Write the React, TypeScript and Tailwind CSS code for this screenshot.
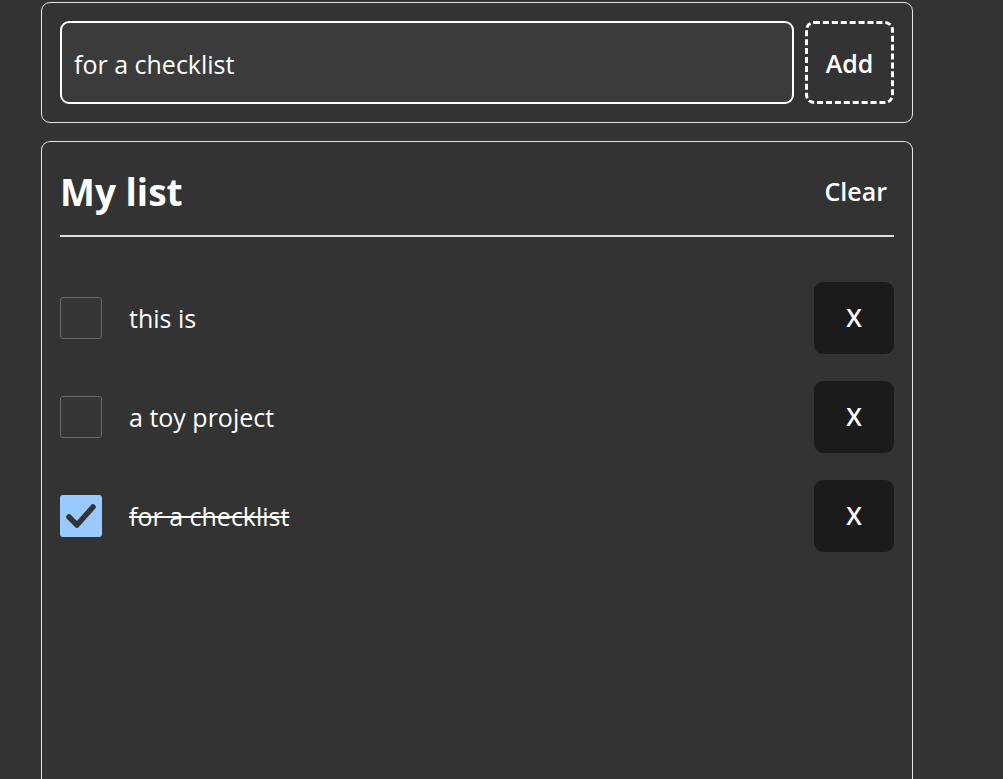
import { useState } from 'react';

type Item = { id: number; text: string; done: boolean };

function CheckBox({ checked, onToggle }: { checked: boolean; onToggle: () => void }) {
  return (
    <button
      onClick={onToggle}
      className={
        checked
          ? 'w-[42px] h-[42px] rounded-[3px] bg-[#99c9ff] flex items-center justify-center'
          : 'w-[42px] h-[42px] rounded-[3px] bg-[#353535] border border-[#6a6a6a]'
      }
    >
      {checked && (
        <svg width="32" height="28" viewBox="0 0 32 28">
          <path d="M4 15 L12 23 L28 5" fill="none" stroke="#333" strokeWidth="5.5" strokeLinecap="round" strokeLinejoin="round" />
        </svg>
      )}
    </button>
  );
}

export default function App() {
  const [draft, setDraft] = useState('for a checklist');
  const [items, setItems] = useState<Item[]>([
    { id: 1, text: 'this is', done: false },
    { id: 2, text: 'a toy project', done: false },
    { id: 3, text: 'for a checklist', done: true },
  ]);

  const add = () => {
    if (!draft.trim()) return;
    setItems([...items, { id: Date.now(), text: draft, done: false }]);
    setDraft('');
  };

  return (
    <div className="min-h-[779px] bg-[#333333] text-white font-['Open_Sans',sans-serif] pl-[41px] pt-[2px]">
      <div className="w-[872px] rounded-[9px] border border-[#e6e6e6] p-[18px] flex gap-[11px]">
        <input
          value={draft}
          onChange={(e) => setDraft(e.target.value)}
          className="flex-1 h-[83px] rounded-[9px] border-2 border-white bg-[#3b3b3b] px-[12px] pt-[2px] text-[25px] text-white outline-none"
        />
        <button
          onClick={add}
          className="w-[89px] h-[83px] rounded-[9px] border-[3px] border-dashed border-white text-[25px] font-semibold pt-[2px]"
        >
          Add
        </button>
      </div>

      <div className="mt-[18px] w-[872px] min-h-[660px] rounded-t-[9px] border border-b-0 border-[#e6e6e6] px-[18px]">
        <div className="flex items-center justify-between h-[95px] border-b-2 border-[#e0e0e0]">
          <h1 className="text-[37px] font-bold leading-none mt-[5px]">My list</h1>
          <button onClick={() => setItems([])} className="text-[25px] font-semibold mr-[7px] mt-[6px]">
            Clear
          </button>
        </div>

        <ul className="pt-[45px] flex flex-col gap-[27px]">
          {items.map((it) => (
            <li key={it.id} className="flex items-center h-[72px]">
              <CheckBox
                checked={it.done}
                onToggle={() => setItems(items.map((x) => (x.id === it.id ? { ...x, done: !x.done } : x)))}
              />
              <span className={`ml-[27px] flex-1 text-[25px] pt-[1px] ${it.done ? 'line-through' : ''}`}>{it.text}</span>
              <button
                onClick={() => setItems(items.filter((x) => x.id !== it.id))}
                className="w-[80px] h-[72px] rounded-[9px] bg-[#1b1b1b] text-[25px] font-semibold"
              >
                X
              </button>
            </li>
          ))}
        </ul>
      </div>
    </div>
  );
}
